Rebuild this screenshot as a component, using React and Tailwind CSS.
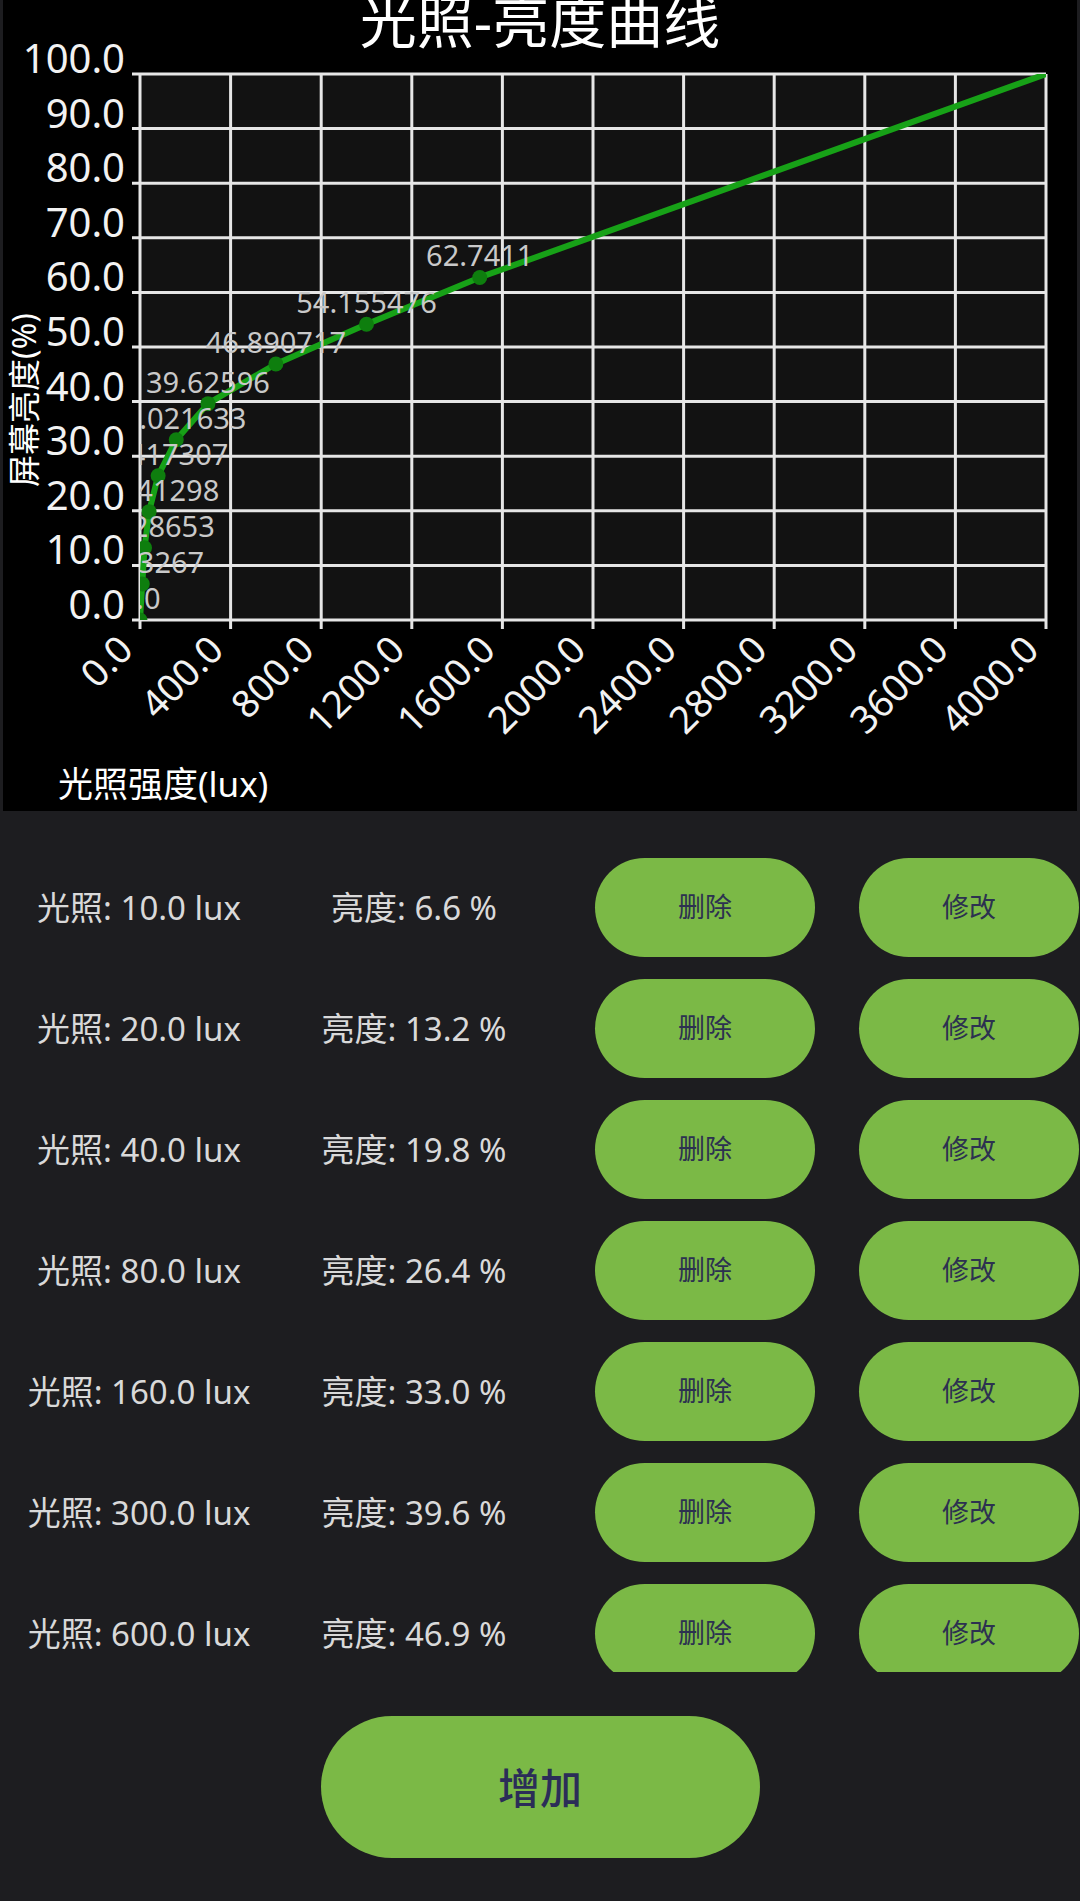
import React from "react";

const L = 140;
const T = 74;
const R = 1046;
const B = 620;
const px = (lux) => L + (lux / 4000) * (R - L);
const py = (v) => B - (v / 100) * (B - T);

// 曲线上的点 (lux, 亮度, 标签)
const points = [
  [0, 0, "0.0"],
  [10, 6.613267, "6.613267"],
  [20, 13.228653, "13.228653"],
  [40, 19.841298, "19.841298"],
  [80, 26.417307, "26.417307"],
  [160, 33.021633, "33.021633"],
  [300, 39.62596, "39.62596"],
  [600, 46.890717, "46.890717"],
  [1000, 54.155476, "54.155476"],
  [1500, 62.7411, "62.7411"],
  [4000, 100, "100.0"],
];

const rows = [
  ["10.0", "6.6"],
  ["20.0", "13.2"],
  ["40.0", "19.8"],
  ["80.0", "26.4"],
  ["160.0", "33.0"],
  ["300.0", "39.6"],
  ["600.0", "46.9"],
];

const FONT = '"Noto Sans", "Noto Sans CJK SC", sans-serif';

function Chart() {
  const xs = Array.from({ length: 11 }, (_, i) => i);
  return (
    <svg width="1074" height="811" viewBox="3 0 1074 811" className="block">
      <defs>
        <clipPath id="plot">
          <rect x={L} y={T} width={R - L} height={B - T} />
        </clipPath>
      </defs>
      <text x="540" y="43" textAnchor="middle" fill="#fff" fontSize="57" fontFamily={FONT}>
        光照-亮度曲线
      </text>
      <rect x={L} y={T} width={R - L} height={B - T} fill="#121212" />
      {xs.map((i) => (
        <line key={"v" + i} x1={px(i * 400)} y1={T} x2={px(i * 400)} y2={B + 9} stroke="#e6e6e6" strokeWidth="3" />
      ))}
      {xs.map((i) => (
        <line key={"h" + i} x1={L - 8} y1={py(i * 10)} x2={R} y2={py(i * 10)} stroke="#e6e6e6" strokeWidth="3" />
      ))}
      {xs.map((i) => (
        <text key={"yl" + i} x="125" y={py(i * 10) - 1} textAnchor="end" fill="#f2f2f2" fontSize="40" fontFamily={FONT}>
          {(i * 10).toFixed(1)}
        </text>
      ))}
      {xs.map((i) => {
        const x = px(i * 400) - 5;
        const y = 652;
        return (
          <text key={"xl" + i} x={x} y={y} textAnchor="end" fill="#f2f2f2" fontSize="38" fontFamily={FONT} transform={`rotate(-45 ${x} ${y})`}>
            {(i * 400).toFixed(1)}
          </text>
        );
      })}
      <g clipPath="url(#plot)">
        <polyline
          points={points.map(([l, v]) => `${px(l)},${py(v)}`).join(" ")}
          fill="none"
          stroke="#17a117"
          strokeWidth="6"
          strokeLinejoin="round"
        />
        {points.slice(0, 10).map(([l, v]) => (
          <circle key={"c" + l} cx={px(l)} cy={py(v)} r="7.5" fill="#0e7e0e" />
        ))}
        {points.map(([l, v, s]) => (
          <text key={"d" + l} x={px(l)} y={py(v) - 11} textAnchor="middle" fill="#c9c9c9" fontSize="29" fontFamily={FONT}>
            {s}
          </text>
        ))}
      </g>
      <text x="23" y="400" textAnchor="middle" dominantBaseline="central" fill="#fff" fontSize="32" fontFamily={FONT} transform="rotate(-90 23 400)">
        屏幕亮度(%)
      </text>
      <text x="58" y="797" fill="#fff" fontSize="35" fontFamily={FONT}>
        光照强度(lux)
      </text>
    </svg>
  );
}

function Row({ lux, bright }) {
  return (
    <div className="flex items-center h-[121px] shrink-0">
      <div className="w-[278px] text-center text-[33px] text-[#d9d9d9]">光照: {lux} lux</div>
      <div className="w-[272px] text-center text-[33px] text-[#d9d9d9]">亮度: {bright} %</div>
      <button className="ml-[45px] w-[220px] h-[99px] rounded-full bg-[#7bb946] text-[27px] text-[#2c3150]">
        删除
      </button>
      <button className="ml-[44px] w-[220px] h-[99px] rounded-full bg-[#7bb946] text-[27px] text-[#2c3150]">
        修改
      </button>
    </div>
  );
}

export default function App() {
  return (
    <div className="w-[1080px] h-[1901px] bg-[#1d1d20] font-['Noto_Sans','Noto_Sans_CJK_SC',sans-serif] overflow-hidden">
      <div className="mx-[3px] h-[811px] bg-black">
        <Chart />
      </div>
      <div className="h-[861px] pt-[36px] overflow-hidden flex flex-col">
        {rows.map(([lux, bright]) => (
          <Row key={lux} lux={lux} bright={bright} />
        ))}
      </div>
      <div className="flex justify-center pt-[44px]">
        <button className="w-[439px] h-[142px] rounded-full bg-[#7bb946] text-[42px] font-medium text-[#2b2d58]">
          增加
        </button>
      </div>
    </div>
  );
}
